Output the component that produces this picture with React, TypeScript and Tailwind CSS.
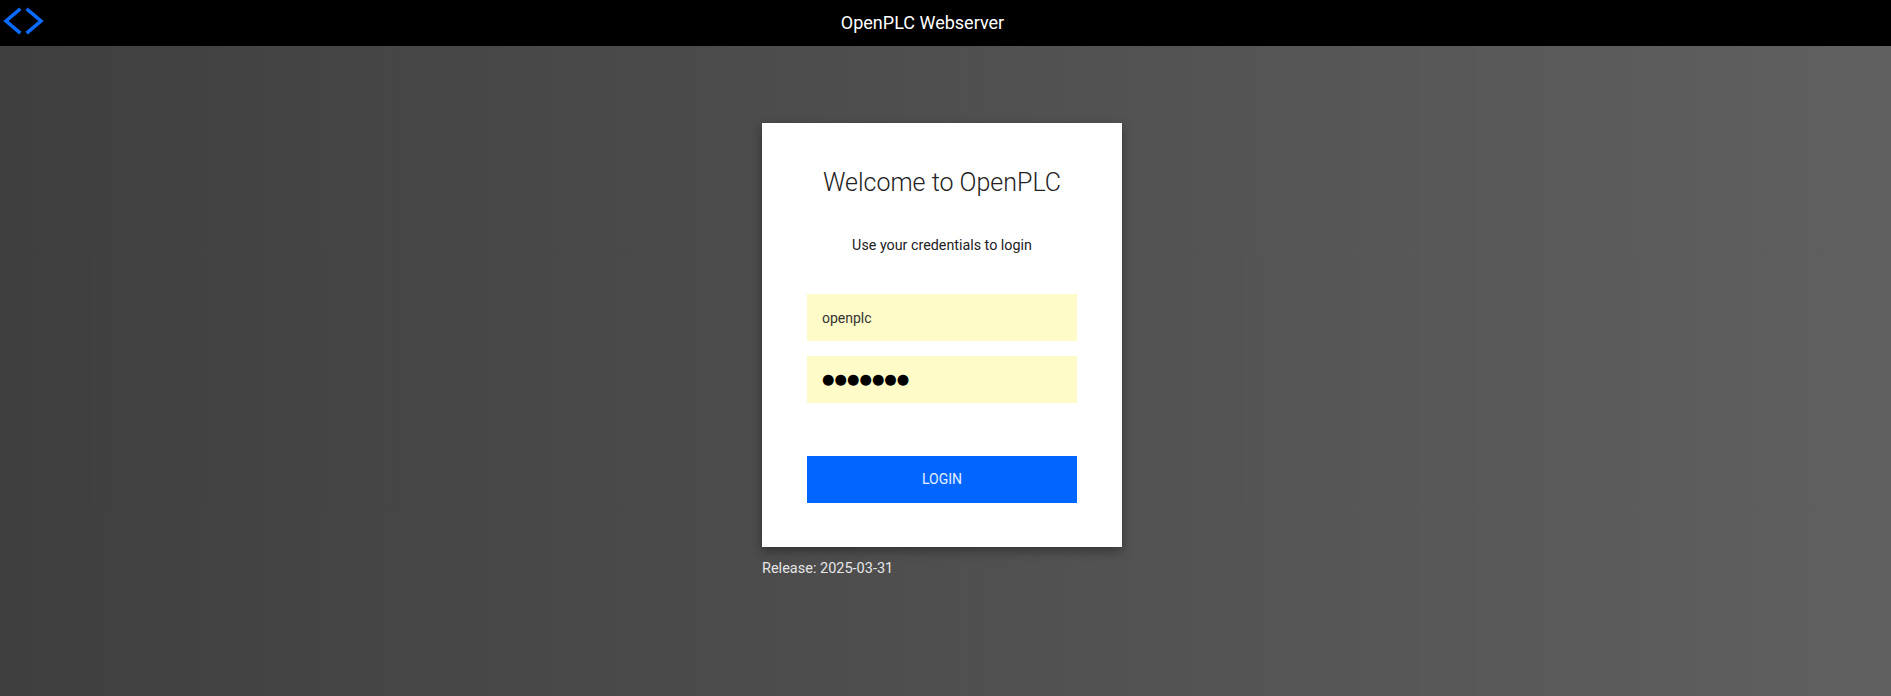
import React from "react";

const font = { fontFamily: "Roboto, 'Liberation Sans', sans-serif" };

const CodeIcon = () => (
  <svg width="46" height="42" viewBox="0 0 46 42" fill="none">
    <polyline points="19,10 6,21 19,32" stroke="#0a6cff" strokeWidth="3.5" strokeLinecap="square" strokeLinejoin="miter" />
    <polyline points="28,10 41,21 28,32" stroke="#0a6cff" strokeWidth="3.5" strokeLinecap="square" strokeLinejoin="miter" />
  </svg>
);

export default function App() {
  return (
    <div className="min-h-[696px] w-full flex flex-col" style={font}>
      <header className="relative h-[46px] bg-black flex items-center justify-center pr-[46px] shrink-0">
        <div className="absolute left-0 top-0">
          <CodeIcon />
        </div>
        <span className="text-white text-[18px] leading-[46px]">OpenPLC Webserver</span>
      </header>

      <main className="flex-1 bg-gradient-to-r from-[#3f3f3f] to-[#606060] flex justify-center pr-[7px]">
        <div className="w-[360px] mt-[77px]">
          <div className="bg-white px-[45px] pt-[45px] pb-[44px] shadow-[0_4px_10px_rgba(0,0,0,0.35)]">
            <h1 className="text-center text-[25px] leading-[30px] font-light text-[#222]">Welcome to OpenPLC</h1>
            <p className="text-center text-[14.3px] leading-[20px] text-[#222] mt-[37px]">
              Use your credentials to login
            </p>
            <form className="mt-[39px] flex flex-col gap-[15px]" onSubmit={(e) => e.preventDefault()}>
              <input
                type="text"
                defaultValue="openplc"
                className="h-[47px] w-full bg-[#fefbc8] px-[15px] text-[14px] text-[#333] outline-none"
                style={font}
              />
              <div
                className="h-[47px] w-full bg-[#fefbc8] px-[15px] flex items-center text-[14.3px] text-black"
                style={{ fontFamily: "'DejaVu Sans', sans-serif" }}
              >
                ●●●●●●●
              </div>
              <button
                type="submit"
                className="mt-[38px] h-[47px] w-full bg-[#0066ff] text-[14px] text-white/90"
                style={font}
              >
                LOGIN
              </button>
            </form>
          </div>
          <p className="mt-[12px] text-[14.5px] leading-[20px] text-[#e6e6e6]">Release: 2025-03-31</p>
        </div>
      </main>
    </div>
  );
}
